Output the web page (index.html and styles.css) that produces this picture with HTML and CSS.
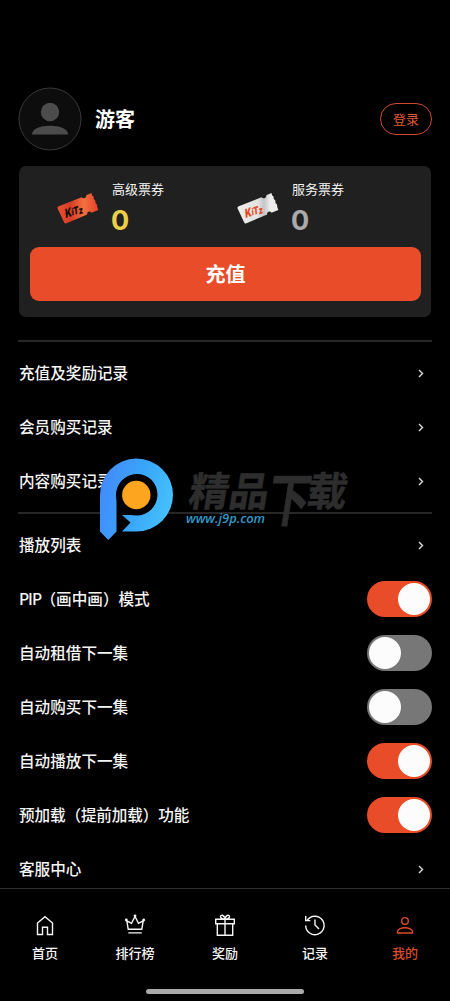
FILE: index.html
```html
<!DOCTYPE html>
<html lang="zh-CN">
<head>
<meta charset="utf-8">
<title>我的</title>
<link rel="stylesheet" href="styles.css">
</head>
<body>
<div class="app">
  <main class="content">
    <header class="profile">
      <svg class="avatar" width="64" height="64" viewBox="0 0 64 64"><circle cx="32" cy="32" r="31" fill="#0d0d0d" stroke="#383838"/><circle cx="32" cy="25" r="9.2" fill="#4c4c4c"/><path d="M14 47.5C14 42 22 38.700 32 38.700S50 42 50 47.500Z" fill="#4c4c4c"/></svg>
      <h1 class="name">游客</h1>
      <button class="login">登录</button>
    </header>

    <section class="wallet">
      <div class="tickets">
        <div class="ticket">
          <svg class="ticket-icon" width="42" height="34" viewBox="0 0 42 34">
            <defs><linearGradient id="red" x1="0" x2="1"><stop offset="0" stop-color="#e9532f"/><stop offset=".32" stop-color="#d63c28"/><stop offset=".65" stop-color="#f3703f"/><stop offset="1" stop-color="#e5402a"/></linearGradient></defs>
            <path d="M1.200 14.500 24.500 5.200Q26 7 28 6 29.800 5 29.200 3.200L34.500 1 35 3.200 36.500 4.500 36.800 7 38.300 8.500 38.500 11 40 12.500 40.300 15 41.300 18 34.500 20.700Q33.500 19 31.500 19.800 29.500 20.800 30.200 22.600L9.500 31.200Q8 32 7.200 30.500L.6 16.500Q.2 15 1.200 14.500Z" fill="url(#red)"/>
            <g class="brand" fill="#180d0b" transform="translate(8.500 26) rotate(-17) skewX(-12)"><text textLength="18.500" lengthAdjust="spacingAndGlyphs"><tspan font-size="12">K</tspan><tspan font-size="9" dy="-.5">i</tspan><tspan font-size="10.500">T</tspan><tspan font-size="10" dy="1">z</tspan></text></g>
          </svg>
          <div><div class="label">高级票券</div><div class="amount gold">0</div></div>
        </div>
        <div class="ticket">
          <svg class="ticket-icon" width="42" height="34" viewBox="0 0 42 34">
            <defs><linearGradient id="white" x1="0" x2="1"><stop offset="0" stop-color="#eee"/><stop offset=".5" stop-color="#e2e2e2"/><stop offset=".65" stop-color="#c4c4c4"/><stop offset=".8" stop-color="#ededed"/></linearGradient></defs>
            <path d="M1.200 14.500 24.500 5.200Q26 7 28 6 29.800 5 29.200 3.200L34.500 1 35 3.200 36.500 4.500 36.800 7 38.300 8.500 38.500 11 40 12.500 40.300 15 41.300 18 34.500 20.700Q33.500 19 31.500 19.800 29.500 20.800 30.200 22.600L9.500 31.200Q8 32 7.200 30.500L.6 16.500Q.2 15 1.200 14.500Z" fill="url(#white)"/>
            <g class="brand" fill="#e34b24" transform="translate(8.500 26) rotate(-17) skewX(-12)"><text textLength="18.500" lengthAdjust="spacingAndGlyphs"><tspan font-size="12">K</tspan><tspan font-size="9" dy="-.5">i</tspan><tspan font-size="10.500">T</tspan><tspan font-size="10" dy="1">z</tspan></text></g>
          </svg>
          <div><div class="label">服务票券</div><div class="amount silver">0</div></div>
        </div>
      </div>
      <button class="recharge">充值</button>
    </section>

    <section class="group">
      <div class="row"><span>充值及奖励记录</span><svg class="chevron" viewBox="0 0 6 9"><path d="m1 1 3.500 3.500L1 8"/></svg></div>
      <div class="row"><span>会员购买记录</span><svg class="chevron" viewBox="0 0 6 9"><path d="m1 1 3.500 3.500L1 8"/></svg></div>
      <div class="row"><span>内容购买记录</span><svg class="chevron" viewBox="0 0 6 9"><path d="m1 1 3.500 3.500L1 8"/></svg></div>
    </section>
    <section class="group">
      <div class="row"><span>播放列表</span><svg class="chevron" viewBox="0 0 6 9"><path d="m1 1 3.500 3.500L1 8"/></svg></div>
      <div class="row"><span><span class="latin">PIP</span>（画中画）模式</span><i class="switch on"></i></div>
      <div class="row"><span>自动租借下一集</span><i class="switch"></i></div>
      <div class="row"><span>自动购买下一集</span><i class="switch"></i></div>
      <div class="row"><span>自动播放下一集</span><i class="switch on"></i></div>
      <div class="row"><span class="tight">预加载（提前加载）功能</span><i class="switch on"></i></div>
      <div class="row"><span>客服中心</span><svg class="chevron" viewBox="0 0 6 9"><path d="m1 1 3.500 3.500L1 8"/></svg></div>
    </section>
  </main>

  <nav class="tabs">
    <div class="tab"><svg viewBox="0 0 24 24"><path d="M4.500 10 12 3.700l7.500 6.300v11.500h-5v-7.200h-5v7.200h-5Z"/></svg><span>首页</span></div>
    <div class="tab"><svg viewBox="0 0 24 24"><path d="M5.200 16.200 3.800 7.800l4.700 2.500L12 3.500l3.500 6.800 4.700-2.500-1.400 8.400ZM5.300 19.900h13.500"/><g fill="currentColor" stroke="none"><circle cx="3.300" cy="7" r="1.400"/><circle cx="12" cy="2.800" r="1.400"/><circle cx="20.700" cy="7" r="1.400"/></g></svg><span>排行榜</span></div>
    <div class="tab"><svg viewBox="0 0 24 24"><path d="M2.700 6.200h18.600v4.500H2.700ZM4.300 10.700h15.400v11.600H4.300ZM12 6.200v16.100M12 6C9 6 7.500 5 7.500 3.500S10.800.7 12 6c1.200-5.300 4.500-4 4.500-2.500S15 6 12 6Z"/></svg><span>奖励</span></div>
    <div class="tab"><svg viewBox="0 0 24 24"><path d="M4.200 7.400A9.200 9.200 0 1 1 2.700 12.500M2.700 3v4.600h4.600M12 6.500V12l4 4"/></svg><span>记录</span></div>
    <div class="tab active"><svg viewBox="0 0 24 24"><circle cx="12" cy="7.900" r="3.300"/><path d="M4.500 20V18.500c0-2 3.500-3.700 7.500-3.700s7.500 1.700 7.500 3.700V20Z"/></svg><span>我的</span></div>
  </nav>
  <div class="home-bar"></div>

  <svg class="watermark" width="264" height="100" viewBox="0 0 264 100">
    <defs><linearGradient id="p" x1="0" y1=".4" x2="1" y2=".7"><stop offset="0" stop-color="#428bfb"/><stop offset=".5" stop-color="#39a7fa"/><stop offset="1" stop-color="#48c4fc"/></linearGradient></defs>
    <path fill="#000" d="M16 37h42v21H16Z"/>
    <path fill="url(#p)" fill-rule="evenodd" d="M2 38.500A36.500 36.500 0 1 1 38.500 74.500H24L32.500 65.500 24 58H39A20.500 20.500 0 1 0 18.500 38V74.500L10.300 83 2 74.500Z"/>
    <circle cx="38.500" cy="38" r="20.500" fill="#000"/>
    <circle cx="38.300" cy="38" r="14.200" fill="#fda51e"/>
    <g class="wm-title" transform="skewX(-9)">
      <text x="97" y="49" textLength="40" lengthAdjust="spacingAndGlyphs">精</text>
      <text x="137" y="49" textLength="40" lengthAdjust="spacingAndGlyphs">品</text>
      <text transform="translate(177 63.500) scale(1 1.450)" textLength="42" lengthAdjust="spacingAndGlyphs">下</text>
      <text x="215" y="49" textLength="40" lengthAdjust="spacingAndGlyphs">载</text>
    </g>
    <text class="wm-url" x="88" y="66" textLength="79" lengthAdjust="spacingAndGlyphs">www.j9p.com</text>
  </svg>
</div>
</body>
</html>
```

FILE: styles.css
```css
* { box-sizing: border-box; }
body { margin: 0; background: #000; color: #f5f5f5; font-family: "Noto Sans CJK SC", sans-serif; }
button { font: inherit; padding: 0; margin: 0; }
.app { position: relative; width: 450px; height: 1001px; overflow: hidden; display: flex; flex-direction: column; background: #000; }
.content { flex: 1; min-height: 0; overflow: hidden; padding: 87px 18px 0; }
.profile { display: flex; align-items: center; height: 64px; }
.avatar { display: block; }
.name { margin: 0 0 0 13px; font-size: 20px; line-height: 30px; font-weight: 700; color: #fff; }
.login { margin-left: auto; width: 52px; height: 32px; border: 1.5px solid #cf4b2c; border-radius: 16px; background: none; color: #e05a38; font-size: 13px; line-height: 28px; }
.wallet { margin: 15px 1px 0; height: 151px; border-radius: 7px; background: #202020; padding: 12px 10px 0 11px; }
.tickets { display: grid; grid-template-columns: 180px 180px; padding-left: 27px; height: 69px; }
.ticket { display: flex; gap: 13px; }
.ticket-icon { margin-top: 14px; }
.brand { font: 900 11px "Inter", sans-serif; }
.label { font-size: 13px; line-height: 21px; }
.amount { font-family: "Inter", sans-serif; font-size: 27px; line-height: 43px; font-weight: 700; margin-left: -1px; }
.gold { color: #ead047; }
.silver { color: #aaa; }
.recharge { display: block; width: 100%; height: 54px; border: 0; border-radius: 9px; background: #e84c28; color: #fff; font-size: 20px; font-weight: 700; line-height: 52px; }
.group { border-top: 2px solid #272727; padding: 4px 0; }
.wallet + .group { margin-top: 23px; }
.row { display: flex; align-items: center; justify-content: space-between; height: 54px; padding-left: 1px; font-size: 15.600px; font-weight: 500; line-height: 24px; }
.row > span { padding-bottom: 2px; }
.latin { display: inline-block; width: 21.500px; letter-spacing: -1px; }
.tight { letter-spacing: -.12px; }
.chevron { width: 6px; height: 9px; margin-right: 8px; fill: none; stroke: #ddd; stroke-width: 1.400; }
.switch { display: flex; align-items: center; width: 65px; height: 36px; padding: 0 2px; border-radius: 18px; background: #777; }
.switch::before { content: ""; width: 32px; height: 32px; border-radius: 50%; background: #fcfcfc; }
.switch.on { background: #e84c28; justify-content: flex-end; }
.tabs { flex: none; height: 101px; border-top: 1px solid #303030; display: grid; grid-template-columns: repeat(5, 1fr); }
.tab { display: flex; flex-direction: column; align-items: center; padding-top: 24px; font-size: 13px; line-height: 20px; font-weight: 500; gap: 6px; }
.tab svg { width: 24px; height: 24px; fill: none; stroke: currentColor; stroke-width: 1.400; }
.tab.active { color: #dc4c2b; }
.home-bar { flex: none; align-self: center; width: 158px; height: 5px; margin-bottom: 7px; border-radius: 3px; background: #aaa; }
.watermark { position: absolute; left: 98px; top: 457px; overflow: visible; }
.wm-title { font: 700 40px "Noto Sans CJK SC", sans-serif; fill: #2d2d2d; stroke: #2d2d2d; stroke-width: .5; }
.wm-url { font: italic 600 12px "Open Sans", sans-serif; fill: #3199c9; }
```
